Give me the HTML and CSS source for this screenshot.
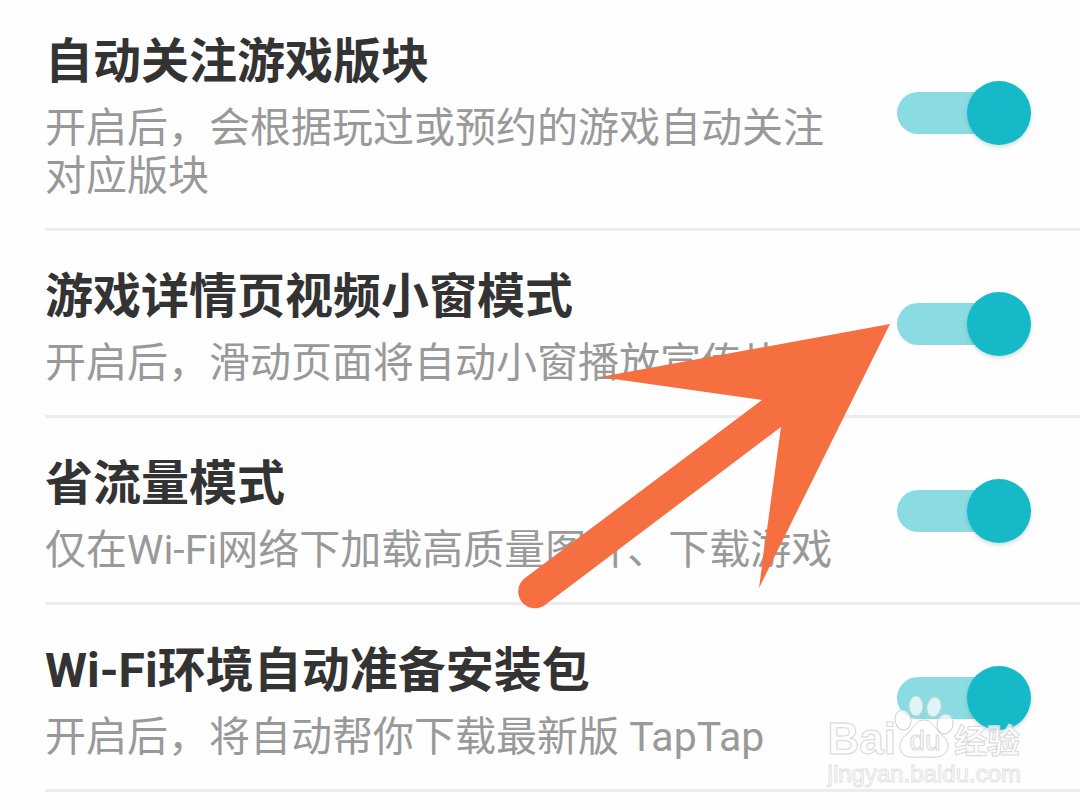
FILE: index.html
```
<!DOCTYPE html>
<html lang="zh-CN">
<head>
    <meta charset="UTF-8">
    <meta name="viewport" content="width=device-width, initial-scale=1.0">
    <title>设置</title>
    <link rel="stylesheet" href="styles.css">
</head>
<body>
    <main class="settings">
        <!-- Settings rows -->
        <div class="row">
            <label class="text" for="follow">
                <span class="title">自动关注游戏版块</span>
                <span class="desc">开启后，会根据玩过或预约的游戏自动关注对应版块</span>
            </label>
            <input type="checkbox" class="toggle" id="follow" checked>
        </div>
        <div class="row">
            <label class="text" for="video">
                <span class="title">游戏详情页视频小窗模式</span>
                <span class="desc">开启后，滑动页面将自动小窗播放宣传片</span>
            </label>
            <input type="checkbox" class="toggle" id="video" checked>
        </div>
        <div class="row">
            <label class="text" for="data">
                <span class="title">省流量模式</span>
                <span class="desc">仅在Wi-Fi网络下加载高质量图片、下载游戏</span>
            </label>
            <input type="checkbox" class="toggle" id="data" checked>
        </div>
        <div class="row">
            <label class="text" for="wifi">
                <span class="title">Wi-Fi环境自动准备安装包</span>
                <span class="desc">开启后，将自动帮你下载最新版 TapTap</span>
            </label>
            <input type="checkbox" class="toggle" id="wifi" checked>
        </div>

        <!-- Arrow pointing at the second switch -->
        <svg class="arrow" viewBox="518 324 372 285" aria-hidden="true">
            <path d="M890 324 L600 377 L762 400 L525 578 A16.500 16.500 0 0 0 545 605 L781 427 L759 588 Z"/>
        </svg>

        <!-- Watermark -->
        <div class="watermark">
            <div class="brand">
                <span>Bai</span>
                <span class="paw">
                    <svg viewBox="0 0 58 64" aria-hidden="true">
                        <ellipse cx="7" cy="25" rx="8" ry="10" transform="rotate(-12 7 25)"/>
                        <ellipse cx="20" cy="11" rx="7" ry="10"/>
                        <ellipse cx="38" cy="12" rx="7" ry="10" transform="rotate(12 38 12)"/>
                        <ellipse cx="49" cy="29" rx="8" ry="10" transform="rotate(12 49 29)"/>
                        <path d="M28 25 C37 25 39 34 45 39 C52 45 54 51 50 57 C45 64 37 62 28 62 C19 62 11 64 6 58 C1 51 5 44 11 39 C17 34 19 25 28 25 Z"/>
                    </svg>
                    <span class="du">du</span>
                </span>
                <span class="cn">经验</span>
            </div>
            <div class="site">jingyan.baidu.com</div>
        </div>
    </main>
</body>
</html>
```
FILE: styles.css
```
body {
    margin: 0;
    background-color: #fefefe;
    font-family: Roboto, "Noto Sans CJK SC", sans-serif;
}
.settings {
    position: relative;
    margin-top: -4px;
    padding-left: 45px;
}
.row {
    display: flex;
    align-items: center;
    gap: 48px;
    padding-right: 49px;
    border-bottom: 3px solid #ececec;
}
.text {
    flex: 1;
    padding: 35px 0 28px;
}
.title, .desc {
    display: block;
}
.title {
    margin-bottom: 11px;
    font-size: 48px;
    font-weight: bold;
    line-height: 62px;
    color: #333;
}
.desc {
    font-size: 41px;
    line-height: 48px;
    color: #999;
}
.toggle {
    appearance: none;
    position: relative;
    width: 134px;
    height: 64px;
    margin: 2px 0 0;
    cursor: pointer;
}
.toggle::before {
    content: "";
    position: absolute;
    top: 11px;
    left: 0;
    width: 120px;
    height: 42px;
    border-radius: 21px;
    background-color: #8adce2;
}
.toggle::after {
    content: "";
    position: absolute;
    top: 0;
    right: 0;
    width: 64px;
    height: 64px;
    border-radius: 50%;
    background-color: #15b9c8;
    box-shadow: 0 2px 4px rgba(0, 80, 90, 0.2);
}
.arrow {
    position: absolute;
    top: 328px;
    left: 518px;
    width: 372px;
    height: 285px;
    fill: #f56f40;
    pointer-events: none;
}
.watermark {
    position: absolute;
    right: 59px;
    bottom: 3px;
    color: rgba(255, 255, 255, 0.8);
    -webkit-text-stroke: 1px #d8d8d8;
    pointer-events: none;
}
.brand {
    display: flex;
    align-items: flex-end;
    font-family: "Liberation Sans", "Noto Sans CJK SC", sans-serif;
    font-size: 44px;
    font-weight: bold;
    line-height: 40px;
}
.paw {
    position: relative;
    width: 58px;
    height: 64px;
}
.paw svg {
    display: block;
    overflow: visible;
    fill: rgba(255, 255, 255, 0.7);
    stroke: #d0d0d0;
}
.du {
    position: absolute;
    right: 0;
    bottom: 0;
    left: 0;
    font-size: 28px;
    font-weight: normal;
    line-height: 36px;
    text-align: center;
}
.cn {
    font-family: "Noto Sans CJK SC", sans-serif;
    font-size: 33px;
}
.site {
    font-family: "Liberation Sans", sans-serif;
    font-size: 24px;
    line-height: 30px;
    -webkit-text-stroke-color: #e2e2e2;
}
```
